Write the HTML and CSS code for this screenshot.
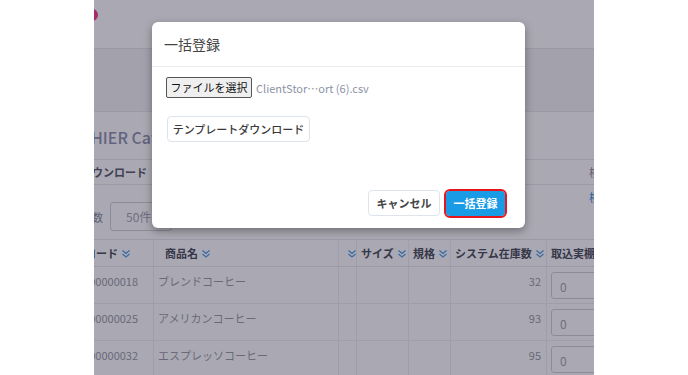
FILE: index.html
```html
<!DOCTYPE html>
<html lang="ja">
<head>
<meta charset="utf-8">
<title>一括登録</title>
<link rel="stylesheet" href="styles.css">
</head>
<body>
<div class="frame">
  <header class="topbar"><span class="logo"></span></header>
  <div class="band"></div>
  <section class="titlebar"><h1 class="page-title">HIER Cafe 店舗</h1></section>
  <div class="tabs">
    <span class="tab">ダウンロード</span>
    <span class="edge-char">検</span>
  </div>
  <div class="controls">
    <div class="perpage">
      <span class="lbl">表示件数</span>
      <div class="select">50件</div>
    </div>
    <span class="edge-char blue">検</span>
  </div>
  <table class="grid">
    <colgroup>
      <col class="c-code"><col class="c-name"><col class="c-blank"><col class="c-size"><col class="c-spec"><col class="c-stock"><col class="c-actual">
    </colgroup>
    <thead>
      <tr>
        <th class="h-code">コード<svg class="sort" viewBox="0 0 10 10"><path d="M1.5 1.5 5 4.5 8.5 1.5M1.5 5 5 8 8.5 5"/></svg></th>
        <th class="h-name">商品名<svg class="sort" viewBox="0 0 10 10"><path d="M1.5 1.5 5 4.5 8.5 1.5M1.5 5 5 8 8.5 5"/></svg></th>
        <th class="h-blank"><svg class="sort" viewBox="0 0 10 10"><path d="M1.5 1.5 5 4.5 8.5 1.5M1.5 5 5 8 8.5 5"/></svg></th>
        <th>サイズ<svg class="sort" viewBox="0 0 10 10"><path d="M1.5 1.5 5 4.5 8.5 1.5M1.5 5 5 8 8.5 5"/></svg></th>
        <th>規格<svg class="sort" viewBox="0 0 10 10"><path d="M1.5 1.5 5 4.5 8.5 1.5M1.5 5 5 8 8.5 5"/></svg></th>
        <th>システム在庫数<svg class="sort" viewBox="0 0 10 10"><path d="M1.5 1.5 5 4.5 8.5 1.5M1.5 5 5 8 8.5 5"/></svg></th>
        <th>取込実棚卸数</th>
      </tr>
    </thead>
    <tbody>
      <tr><td>4900000018</td><td>ブレンドコーヒー</td><td></td><td></td><td></td><td class="num">32</td><td><div class="qty">0</div></td></tr>
      <tr><td>4900000025</td><td>アメリカンコーヒー</td><td></td><td></td><td></td><td class="num">93</td><td><div class="qty">0</div></td></tr>
      <tr><td>4900000032</td><td>エスプレッソコーヒー</td><td></td><td></td><td></td><td class="num">95</td><td><div class="qty">0</div></td></tr>
    </tbody>
  </table>

  <div class="overlay"></div>

  <div class="modal">
    <div class="modal-header"><h2 class="modal-title">一括登録</h2></div>
    <div class="modal-body">
      <div class="file-row">
        <button class="file-btn" type="button">ファイルを選択</button>
        <span class="file-name">ClientStor…ort (6).csv</span>
      </div>
      <button class="btn-light" type="button">テンプレートダウンロード</button>
    </div>
    <div class="modal-footer">
      <button class="btn-cancel" type="button">キャンセル</button>
      <button class="btn-primary" type="button">一括登録</button>
    </div>
  </div>
</div>
</body>
</html>
```

FILE: styles.css
```css
* { box-sizing: border-box; }
html, body { margin: 0; padding: 0; background: #ffffff; }
body {
  font-family: "Noto Sans CJK JP", "Noto Sans", sans-serif;
  color: #333;
}
.frame {
  position: relative;
  width: 500px;
  height: 375px;
  margin-left: 94px;
  overflow: hidden;
  background: #ffffff;
}
.topbar {
  height: 49px;
  border-bottom: 1px solid #e4e5ea;
  display: flex;
  align-items: flex-start;
}
.logo {
  width: 12px;
  height: 12px;
  border-radius: 50%;
  background: #f23b8c;
  margin: 9px 0 0 -8px;
}
.band {
  height: 63px;
  background: #f2f2f5;
  border-bottom: 1px solid #e6e7ec;
}
.titlebar {
  height: 48px;
  border-bottom: 1px solid #e7e8ec;
  display: flex;
  align-items: center;
  padding-top: 2px;
}
.page-title {
  margin: 0 0 0 -3px;
  font-size: 16px;
  font-weight: 500;
  color: #8f94ae;
  white-space: nowrap;
}
.tabs {
  height: 25px;
  border-bottom: 1px solid #e7e8ec;
  display: flex;
  justify-content: space-between;
  align-items: center;
}
.tab {
  margin-left: -13px;
  font-size: 11px;
  font-weight: 700;
  color: #5a5c68;
}
.edge-char {
  font-size: 11px;
  color: #8a8d99;
  margin-right: -6px;
  align-self: center;
}
.edge-char.blue { color: #3c8fe0; align-self: flex-start; margin-top: 4px; }
.controls {
  height: 54px;
  display: flex;
  justify-content: space-between;
  align-items: flex-start;
}
.perpage {
  display: flex;
  align-items: center;
  gap: 7px;
  margin-top: 17px;
}
.lbl {
  margin-left: -35px;
  font-size: 11px;
  color: #8b8e9a;
}
.select {
  width: 62px;
  height: 29px;
  border: 1px solid #cfd2d8;
  border-radius: 3px;
  font-size: 12px;
  color: #a3a5ae;
  padding: 5px 0 0 15px;
}
.grid {
  border-collapse: collapse;
  table-layout: fixed;
  width: 574px;
  margin-left: -22px;
  font-size: 11px;
}
.c-code { width: 81px; }
.c-name { width: 185px; }
.c-blank { width: 18px; }
.c-size { width: 52px; }
.c-spec { width: 42px; }
.c-stock { width: 96px; }
.c-actual { width: 100px; }
.grid th {
  height: 27px;
  border-top: 1px solid #e7e8ec;
  border-bottom: 1px solid #e7e8ec;
  border-left: 1px solid #eeeff2;
  text-align: left;
  font-weight: 700;
  color: #4a4d58;
  padding: 0 0 0 4px;
  white-space: nowrap;
  vertical-align: middle;
}
.grid th.h-code { padding-left: 12px; }
.grid th.h-name { padding-left: 11px; }
.grid th.h-blank { padding-left: 5px; }
.sort {
  width: 10px;
  height: 10px;
  margin-left: 3px;
  vertical-align: -1px;
  fill: none;
  stroke: #4d9de6;
  stroke-width: 1.2;
}
.grid td {
  height: 37px;
  border-bottom: 1px solid #eceef1;
  border-left: 1px solid #eceef1;
  vertical-align: top;
  padding: 6px 4px 0 4px;
  color: #9a9ba3;
  white-space: nowrap;
  overflow: hidden;
}
.grid td.num { text-align: right; padding-right: 5px; }
.qty {
  width: 60px;
  height: 27px;
  margin-top: -1px;
  border: 1px solid #cfd2d8;
  border-radius: 3px;
  font-size: 12px;
  color: #a3a5ae;
  padding: 5px 0 0 8px;
}
.overlay {
  position: absolute;
  inset: 0;
  background: rgba(20, 18, 45, 0.36);
}
.modal {
  position: absolute;
  left: 58px;
  top: 22px;
  width: 373px;
  height: 206px;
  background: #fff;
  border-radius: 6px;
  box-shadow: 0 3px 9px rgba(0, 0, 0, 0.35);
  display: flex;
  flex-direction: column;
}
.modal-header {
  height: 45px;
  border-bottom: 1px solid #e9ecef;
  display: flex;
  align-items: center;
  padding-left: 12px;
}
.modal-title {
  margin: 0;
  font-size: 14px;
  font-weight: 400;
  color: #444;
}
.modal-body {
  flex: 1;
  padding: 10px 15px 0 14px;
  display: flex;
  flex-direction: column;
  align-items: flex-start;
  gap: 18px;
}
.file-row {
  display: flex;
  align-items: center;
  gap: 4px;
}
.file-btn {
  font-family: inherit;
  height: 21px;
  width: 86px;
  font-size: 11px;
  color: #111;
  background: #efefef;
  border: 1px solid #555;
  border-radius: 2px;
  padding: 0;
  line-height: 19px;
  white-space: nowrap;
}
.file-name {
  font-size: 11px;
  color: #8c93a6;
}
.btn-light {
  font-family: inherit;
  height: 26px;
  width: 143px;
  margin-left: 1px;
  font-size: 11px;
  font-weight: 500;
  color: #3a3a3a;
  background: #fff;
  border: 1px solid #dde3ec;
  border-radius: 4px;
  padding: 0;
}
.modal-footer {
  display: flex;
  justify-content: flex-end;
  align-items: center;
  gap: 6px;
  padding: 0 20px 12px 0;
}
.btn-cancel {
  font-family: inherit;
  width: 72px;
  height: 26px;
  font-size: 11px;
  font-weight: 700;
  color: #444;
  background: #fff;
  border: 1px solid #dfe4ec;
  border-radius: 4px;
  padding: 0;
}
.btn-primary {
  font-family: inherit;
  width: 59px;
  height: 25px;
  font-size: 11px;
  font-weight: 700;
  color: #fff;
  background: #1a9be6;
  border: none;
  border-radius: 4px;
  outline: 2px solid #e8151b;
  padding: 0;
}
```
